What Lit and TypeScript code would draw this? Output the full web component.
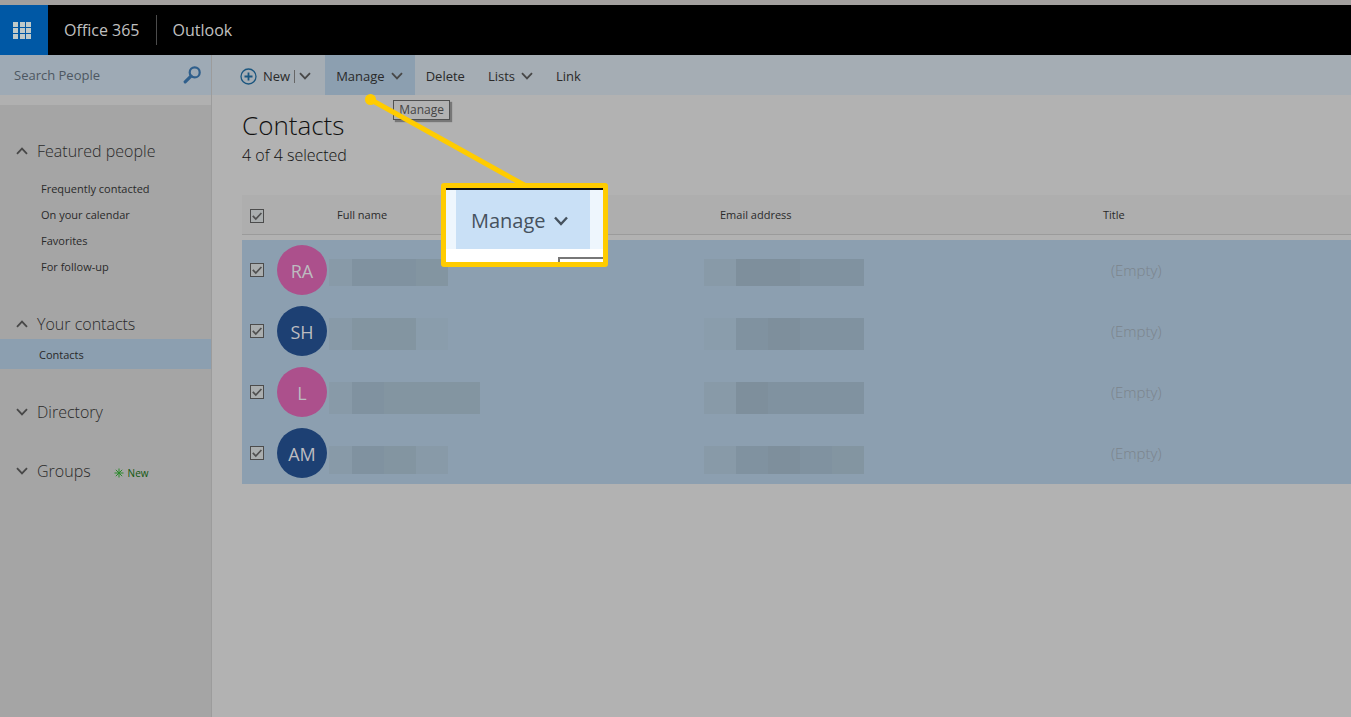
import { LitElement, html, css, svg } from "lit";
import { customElement } from "lit/decorators.js";
import { classMap } from "lit/directives/class-map.js";

type Tone = "t0" | "t1" | "t2" | "t3" | "t4";

interface Mask {
  cells: Tone[];
}

interface Contact {
  initials: string;
  color: "pink" | "blue";
  band: string;
  name: Mask;
  email: Mask;
}

const contacts: Contact[] = [
  { initials: "RA", color: "pink", band: "band-a", name: { cells: ["t1", "t3", "t3", "t2"] }, email: { cells: ["t1", "t4", "t4", "t3", "t3"] } },
  { initials: "SH", color: "blue", band: "band-b", name: { cells: ["t1", "t2", "t2", "t0"] }, email: { cells: ["t0", "t3", "t4", "t3", "t3"] } },
  { initials: "L", color: "pink", band: "band-c", name: { cells: ["t1", "t3", "t2", "t2", "t2"] }, email: { cells: ["t1", "t4", "t3", "t3", "t3"] } },
  { initials: "AM", color: "blue", band: "band-d", name: { cells: ["t1", "t3", "t2", "t1"] }, email: { cells: ["t1", "t3", "t4", "t3", "t2"] } },
];

const chevron = (up = false) => html`<svg class="chevron" viewBox="0 0 12 8" width="12" height="8" aria-hidden="true">
  <path d=${up ? "M1 6.8 6 1.6 11 6.8" : "M1 1.2 6 6.4 11 1.2"} fill="none" stroke="currentColor" stroke-width="1.8" />
</svg>`;

@customElement("app-root")
export class AppRoot extends LitElement {
  static styles = css`
    :host {
      display: flex;
      flex-direction: column;
      position: relative;
      min-height: 100vh;
      overflow: hidden;
      background: #b2b2b2;
      color: #2a2a2a;
      font-family: "Open Sans", "Noto Sans", sans-serif;
      font-size: 13px;
    }
    * { box-sizing: border-box; }
    button, input { font: inherit; color: inherit; border: 0; background: none; margin: 0; padding: 0; }
    a { color: inherit; text-decoration: none; }
    svg { display: block; flex: none; }
    h1, p, ul { margin: 0; padding: 0; list-style: none; }

    .suite { display: flex; align-items: center; height: 55px; background: #000; border-top: 5px solid #a3a09e; color: #c0c0c0; font-size: 16px; }
    .launcher { display: grid; place-items: center; width: 48px; height: 50px; padding-right: 4px; background: #0058a5; color: #bfcac9; }
    .brand { padding: 0 16px; }
    .app { padding: 0 16px; line-height: 30px; border-left: 1px solid #4b4b4b; }

    .body { display: flex; flex: 1; }
    .side { display: flex; flex-direction: column; width: 212px; flex: none; border-right: 1px solid #9c9c9c; background: #a5a5a5; }
    .search { display: flex; align-items: center; height: 40px; padding: 0 9px 0 14px; background: #9eaab5; }
    .search input { flex: 1; min-width: 0; outline: none; }
    .search input::placeholder { color: #4d5761; opacity: 1; }
    .search button { color: #2f5f8c; }
    .nav { border-top: 10px solid #b0b0b0; padding-top: 31px; }
    .group { display: flex; align-items: center; gap: 9px; height: 30px; padding-left: 16px; font-size: 16px; font-weight: 300; }
    .chevron { color: #484848; }
    .featured { padding: 10px 0 29px; }
    .item { display: block; height: 26px; line-height: 26px; padding-left: 41px; font-size: 11px; }
    .picked { height: 30px; line-height: 31px; padding-left: 39px; margin-bottom: 28px; background: #8c9fb0; }
    .directory { margin-bottom: 29px; }
    .fresh { display: flex; align-items: center; gap: 4px; padding: 4px 0 0 14px; font-size: 10px; font-weight: 400; color: #11570f; }

    .main { flex: 1; min-width: 0; }
    .tools { display: flex; height: 40px; padding-left: 17px; background: #a5adb4; }
    .tool { display: flex; align-items: center; gap: 6px; padding: 2px 12px 0 11px; }
    .new { padding-right: 14px; }
    .new-split { display: flex; align-items: center; gap: 4px; }
    .bar { width: 1px; height: 13px; background: #666; }
    .manage { position: relative; display: flex; background: #8c9fb0; }
    .tooltip { position: absolute; top: 45px; left: 68px; padding: 0 5px; line-height: 18px; font-size: 12px; color: #444; background: #b2b2b2; border: 1px solid #505050; box-shadow: 2px 2px 1px #777; }
    h1 { padding: 12px 0 0 30px; font-size: 26px; line-height: 36px; font-weight: 300; color: #111; }
    .count { padding-left: 30px; font-size: 16px; line-height: 24px; font-weight: 300; color: #111; }

    .list { padding: 28px 0 0 30px; }
    table { width: 100%; table-layout: fixed; border-collapse: separate; border-spacing: 0; }
    th, td { padding: 0; text-align: left; vertical-align: top; font-weight: 400; }
    thead th { height: 40px; background: #aeaeae; border-bottom: 1px solid #9b9b9b; font-size: 11px; line-height: 39px; }
    .spacer td { height: 5px; }
    .c-check { width: 35px; }
    .c-name { width: 427px; }
    .c-email { width: 399px; }
    .h-name { padding-left: 60px; }
    .h-email { padding-left: 16px; }
    .contact td { height: 61px; background: #8c9fb0; }
    .check { display: grid; width: 14px; height: 14px; margin: 14px 0 0 8px; }
    .contact .check { margin-top: 23px; }
    .check input, .check svg { grid-area: 1 / 1; }
    .check input { appearance: none; width: 14px; height: 14px; border: 1px solid #4c4c4c; background: #aaaeaf; }
    .check svg { pointer-events: none; color: #505050; }
    .person { display: flex; align-items: flex-start; gap: 2px; }
    .avatar { display: grid; place-items: center; width: 50px; height: 50px; padding-top: 2px; margin-top: 5px; border-radius: 50%; color: #bcbcc0; font-size: 18px; }
    .pink { background: #ac508c; }
    .blue { background: #1d4073; }
    .mask { display: flex; }
    .mask span { width: 32px; }
    .person .mask span:first-child { width: 23px; }
    .band-a { height: 27px; margin-top: 19px; }
    .band-b { height: 32px; margin-top: 17px; }
    .band-c { height: 32px; margin-top: 20px; }
    .band-d { height: 28px; margin-top: 23px; }
    .t0 { background: #8a9dac; }
    .t1 { background: #889aa8; }
    .t2 { background: #8395a1; }
    .t3 { background: #8092a0; }
    .t4 { background: #7e8f9c; }
    .contact .empty { padding-left: 8px; line-height: 60px; font-size: 15px; font-weight: 300; color: #7b848c; }

    .callout-line { position: absolute; top: 90px; left: 360px; pointer-events: none; }
    .callout { position: absolute; top: 183px; left: 441px; width: 167px; height: 84px; border: 5px solid #fc0; border-radius: 3px; overflow: hidden; background: #fff; pointer-events: none; }
    .zoom-bar { display: flex; height: 61px; padding: 0 13px 0 10px; border-top: 2px solid #111; background: #eef6fd; }
    .zoom-button { display: flex; flex: 1; align-items: center; gap: 8px; padding: 2px 0 0 15px; background: #c9e0f6; color: #46525e; font-size: 20px; }
    .zoom-tip { height: 20px; margin: 8px 0 0 112px; border: 2px solid #777; border-right: 0; }
  `;

  private check(label: string) {
    return html`<label class="check">
      <input type="checkbox" checked aria-label=${label} />
      <svg viewBox="0 0 14 14" width="14" height="14" aria-hidden="true">
        <path d="M2.8 6.8 5.8 10 11.4 4" fill="none" stroke="currentColor" stroke-width="1.7" />
      </svg>
    </label>`;
  }

  private mask(mask: Mask, band: string) {
    return html`<div class=${classMap({ mask: true, [band]: true })}>${mask.cells.map((tone) => html`<span class=${tone}></span>`)}</div>`;
  }

  private row(c: Contact) {
    return html`<tr class="contact">
      <td>${this.check(c.initials)}</td>
      <td>
        <div class="person">
          <div class=${classMap({ avatar: true, [c.color]: true })}>${c.initials}</div>
          ${this.mask(c.name, c.band)}
        </div>
      </td>
      <td>${this.mask(c.email, c.band)}</td>
      <td class="empty">(Empty)</td>
    </tr>`;
  }

  render() {
    return html`
      <header class="suite">
        <button class="launcher" aria-label="App launcher">
          <svg viewBox="0 0 18 17" width="18" height="17" fill="currentColor">
            ${[0, 6, 12].map((y) => [0, 7, 13].map((x) => svg`<rect x=${x} y=${y} width="5" height="5" />`))}
          </svg>
        </button>
        <a class="brand" href="#">Office 365</a>
        <a class="app" href="#">Outlook</a>
      </header>
      <div class="body">
        <aside class="side">
          <form class="search">
            <input type="text" placeholder="Search People" aria-label="Search People" />
            <button type="button" aria-label="Search">
              <svg viewBox="0 0 19 18" width="19" height="18">
                <circle cx="11.7" cy="6.4" r="5" fill="none" stroke="currentColor" stroke-width="2.2" />
                <path d="M8 10.2 2.2 15.8" stroke="currentColor" stroke-width="3.2" stroke-linecap="round" />
              </svg>
            </button>
          </form>
          <nav class="nav">
            <button class="group">${chevron(true)}Featured people</button>
            <ul class="featured">
              ${["Frequently contacted", "On your calendar", "Favorites", "For follow-up"].map((t) => html`<li><a class="item" href="#">${t}</a></li>`)}
            </ul>
            <button class="group">${chevron(true)}Your contacts</button>
            <a class="item picked" href="#">Contacts</a>
            <button class="group directory">${chevron()}Directory</button>
            <button class="group">
              ${chevron()}Groups
              <span class="fresh">
                <svg viewBox="0 0 10 10" width="10" height="10" stroke="#2b8a2b" stroke-width="1">
                  <path d="M5 0.5V9.5M0.5 5H9.5M1.8 1.8 8.2 8.2M8.2 1.8 1.8 8.2" />
                </svg>
                New
              </span>
            </button>
          </nav>
        </aside>
        <main class="main">
          <div class="tools">
            <button class="tool new">
              <svg viewBox="0 0 17 17" width="17" height="17" fill="none" stroke="#1b567f">
                <circle cx="8.5" cy="8.5" r="7.5" stroke-width="1.3" />
                <path d="M8.5 4.5V12.5M4.5 8.5H12.5" stroke-width="1.8" />
              </svg>
              <span class="new-split">New<span class="bar"></span>${chevron()}</span>
            </button>
            <div class="manage">
              <button class="tool">Manage${chevron()}</button>
              <div class="tooltip" role="tooltip">Manage</div>
            </div>
            <button class="tool">Delete</button>
            <button class="tool">Lists${chevron()}</button>
            <button class="tool">Link</button>
          </div>
          <h1>Contacts</h1>
          <p class="count">4 of 4 selected</p>
          <div class="list">
            <table>
              <thead>
                <tr>
                  <th class="c-check">${this.check("Select all")}</th>
                  <th class="c-name h-name">Full name</th>
                  <th class="c-email h-email">Email address</th>
                  <th>Title</th>
                </tr>
              </thead>
              <tbody>
                <tr class="spacer"><td colspan="4"></td></tr>
                ${contacts.map((c) => this.row(c))}
              </tbody>
            </table>
          </div>
        </main>
      </div>
      <svg class="callout-line" viewBox="0 0 180 100" width="180" height="100" aria-hidden="true">
        <circle cx="10.5" cy="9.5" r="5.5" fill="#fc0" />
        <path d="M10.5 9.5 166 96" stroke="#fc0" stroke-width="5" />
      </svg>
      <div class="callout">
        <div class="zoom-bar"><div class="zoom-button">Manage
          <svg viewBox="0 0 14 10" width="14" height="10"><path d="M1 1.5 7 8 13 1.5" fill="none" stroke="currentColor" stroke-width="2.4" /></svg>
        </div></div>
        <div class="zoom-tip"></div>
      </div>
    `;
  }
}
